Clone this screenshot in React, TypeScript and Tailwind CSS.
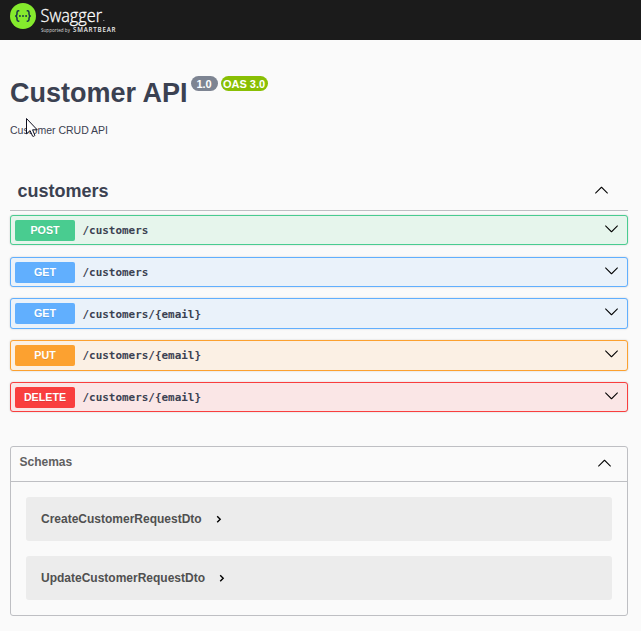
import React from "react";

function Arrow({ up = false, className = "" }: { up?: boolean; className?: string }) {
  return (
    <svg viewBox="0 0 20 20" className={`h-[15px] w-[15px] shrink-0 fill-black ${up ? "rotate-180" : ""} ${className}`}>
      <path d="M17.418 6.109c.272-.268.709-.268.979 0s.271.701 0 .969l-7.908 7.83c-.27.268-.707.268-.979 0l-7.908-7.83c-.27-.268-.27-.701 0-.969.271-.268.709-.268.979 0L10 13.25z" />
    </svg>
  );
}

function Logo() {
  return (
    <svg viewBox="0 0 120 40" className="block h-10 w-[120px]">
      <circle cx="23" cy="16" r="13" fill="#85ea2d" />
      <g fill="none" stroke="#173647" strokeWidth="1.5">
        <path d="M19.3 10.7h-.7c-1.2 0-1.6.6-1.6 1.7v1.5c0 1.2-.5 1.9-1.7 2.1 1.2.2 1.7.9 1.7 2.1v1.5c0 1.1.4 1.7 1.6 1.7h.7" />
        <path d="M26.7 10.7h.7c1.2 0 1.6.6 1.6 1.7v1.5c0 1.2.5 1.9 1.7 2.1-1.2.2-1.7.9-1.7 2.1v1.5c0 1.1-.4 1.7-1.6 1.7h-.7" />
      </g>
      <g fill="#173647">
        <circle cx="19.9" cy="16" r=".95" />
        <circle cx="23" cy="16" r=".95" />
        <circle cx="26.1" cy="16" r=".95" />
      </g>
      <text x="40.5" y="21.5" fill="#fff" stroke="#fff" strokeWidth="0.3" className="font-['Open_Sans','Noto_Sans',sans-serif] text-[17.5px] font-light" textLength="61.5" lengthAdjust="spacingAndGlyphs">Swagger</text>
      <rect x="103" y="20" width="1.5" height="1" fill="#777" />
      <text x="41" y="32" fill="#ddd" className="font-['Open_Sans','Noto_Sans',sans-serif] text-[5.2px]" textLength="29" lengthAdjust="spacingAndGlyphs">Supported by</text>
      <text x="73" y="32" fill="#eee" className="font-['Open_Sans','Noto_Sans',sans-serif] text-[6.2px] font-semibold" textLength="42.5">SMARTBEAR</text>
    </svg>
  );
}

const operations = [
  { method: "POST", path: "/customers", box: "h-[30px] mb-3 border-[#49cc90] bg-[#e6f5ec]", badge: "bg-[#49cc90]" },
  { method: "GET", path: "/customers", box: "h-[30px] mb-[11px] border-[#61affe] bg-[#eaf2fa]", badge: "bg-[#61affe]" },
  { method: "GET", path: "/customers/{email}", box: "h-[31px] mb-[11px] border-[#61affe] bg-[#eaf2fa]", badge: "bg-[#61affe]", nudge: "mt-px" },
  { method: "PUT", path: "/customers/{email}", box: "h-[31px] mb-[11px] border-[#fca130] bg-[#fbf0e4]", badge: "bg-[#fca130]" },
  { method: "DELETE", path: "/customers/{email}", box: "h-[30px] border-[#f93e3e] bg-[#fae6e6]", badge: "bg-[#f93e3e]" },
];

const schemas = ["CreateCustomerRequestDto", "UpdateCustomerRequestDto"];

export default function App() {
  return (
    <div className="relative h-[631px] w-[641px] overflow-hidden bg-[#fafafa] font-['Liberation_Sans',Arial,sans-serif] text-[#3b4151]">
      <header className="h-10 bg-[#1b1b1b]">
        <Logo />
      </header>

      <main className="pr-[13px] pl-[10px]">
        <div className="flex h-[71px] items-start pt-[36px]">
          <h1 className="mt-px text-[27px] leading-[33px] font-bold whitespace-nowrap">Customer API</h1>
          <span className="ml-[3px] flex h-[15px] w-[27px] items-center justify-center rounded-full bg-[#7d8492] pt-px text-[11px] leading-none font-bold text-white">1.0</span>
          <span className="ml-[3px] flex h-[15px] w-[47px] items-center justify-center rounded-full bg-[#89bf04] pt-px text-[11px] leading-none font-bold whitespace-nowrap text-white">OAS 3.0</span>
        </div>
        <p className="mt-[11px] text-[10.5px] leading-4">Customer CRUD API</p>

        <div className="mt-[33px] flex h-10 items-center justify-between border-b border-[#bebfc3] pr-[19px] pl-[7.5px]">
          <h2 className="pt-0.5 text-[18px] font-bold">customers</h2>
          <Arrow up />
        </div>

        <section className="mt-1">
          {operations.map((op, i) => (
            <div key={i} className={`flex items-center rounded-[3px] border pr-2 pl-1 shadow-[0_0_2px_rgba(0,0,0,0.19)] ${op.box}`}>
              <span className={`flex h-[21px] w-[60px] items-center justify-center rounded-[2px] text-[10.7px] leading-none font-bold text-white [text-shadow:0_1px_0_rgba(0,0,0,0.1)] ${op.badge}`}>{op.method}</span>
              <span className={`ml-[7.5px] flex-1 pt-px font-['DejaVu_Sans_Mono',monospace] text-[10.95px] leading-4 font-bold ${op.nudge ?? ""}`}>{op.path}</span>
              <Arrow className="-mt-1" />
            </div>
          ))}
        </section>

        <section className="mt-[34px] h-[170px] rounded-[3px] border border-[#bebfc3]">
          <div className="flex h-[35px] items-center justify-between border-b border-[#bebfc3] pr-[15px] pl-[8.5px]">
            <h2 className="-mt-1 text-[12px] font-bold text-[#606060]">Schemas</h2>
            <Arrow up className="-mt-px" />
          </div>
          <div className="flex flex-col gap-[15px] px-[15px] pt-[15px]">
            {schemas.map((name) => (
              <div key={name} className="flex h-11 items-center rounded-[3px] bg-[#ececec] pl-[15px]">
                <span className="text-[12px] leading-4 font-bold text-[#505050]">{name}</span>
                <svg viewBox="0 0 8 8" className="ml-[13px] h-2 w-2 fill-none stroke-black [stroke-width:1.4]">
                  <path d="M2.2 1.2 5.2 4.2 2.2 7.2" />
                </svg>
              </div>
            ))}
          </div>
        </section>
      </main>

      <svg viewBox="0 0 13 20" className="absolute top-[118px] left-[26px] h-5 w-[13px]">
        <path d="M.5.5v15.3l3.6-3.2 2.5 5.6c.9.5 2 0 2.2-.9L6.6 11.8h4.6z" fill="#fff" stroke="#101020" strokeWidth="1" />
      </svg>
    </div>
  );
}
